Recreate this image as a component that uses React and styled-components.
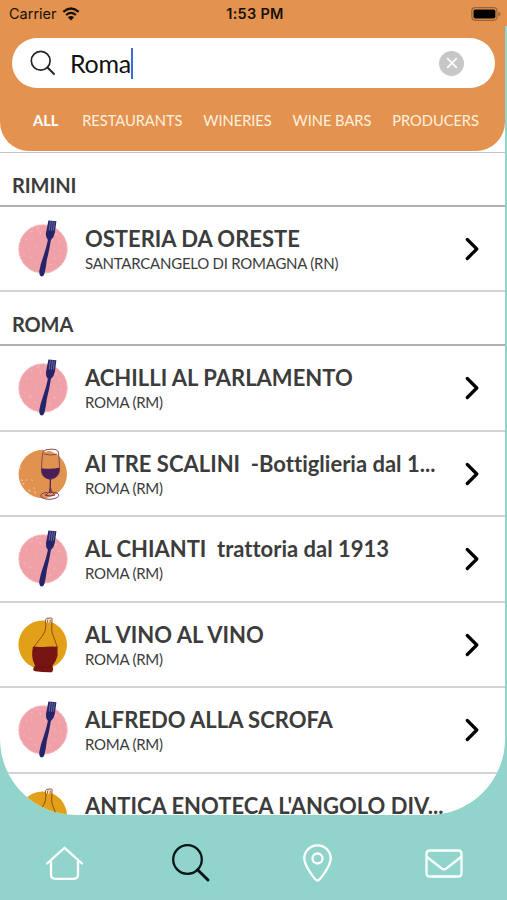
import React from 'react';
import styled, { createGlobalStyle } from 'styled-components'

const sections = [
    {
        city: 'RIMINI',
        places: [
            { name: 'OSTERIA DA ORESTE', town: 'SANTARCANGELO DI ROMAGNA (RN)', type: 'restaurant' },
        ],
    },
    {
        city: 'ROMA',
        places: [
            { name: 'ACHILLI AL PARLAMENTO', town: 'ROMA (RM)', type: 'restaurant' },
            { name: 'AI TRE SCALINI  -Bottiglieria dal 1...', town: 'ROMA (RM)', type: 'wineBar' },
            { name: 'AL CHIANTI  trattoria dal 1913', town: 'ROMA (RM)', type: 'restaurant' },
            { name: 'AL VINO AL VINO', town: 'ROMA (RM)', type: 'winery' },
            { name: 'ALFREDO ALLA SCROFA', town: 'ROMA (RM)', type: 'restaurant' },
            { name: "ANTICA ENOTECA L'ANGOLO DIV...", type: 'winery' },
        ],
    },
]

const filters = ['ALL', 'RESTAURANTS', 'WINERIES', 'WINE BARS', 'PRODUCERS']

function ForkIcon() {
    return (
        <PlaceImage viewBox='0 0 52 60'>
            <circle cx='26' cy='30' r='24' fill='#f0a0a7' />
            <circle cx='26' cy='30' r='24.2' fill='none' stroke='#f3abb1' strokeWidth='.9' strokeDasharray='5 1 9 .8 3 .6' />
            <g stroke='#f8ccd0' strokeWidth='1.1' strokeLinecap='round' opacity='.6'>
                <path d='M14 13l1.500-1M20 9.500l2-.8M23 13l.5 2M9 21l.6-.8M15 20l.1.1M7 34l.3 1M13 38l1 1M18 44l.1.8M38 15l2 1M42 22l.5 1M44 31l.1 1M37 40l1-1M33 46l1-.5M19 28l.2.2M38 29l.1.1M12 30l.1.1' />
            </g>
            <path d='M31.400 1.600L39.400 2.300L37.800 14Q37 18.500 33.900 21Q32.300 31.500 29.800 41Q29 49 27.500 54.500Q26.500 58 24 57.300Q22 56.500 22.300 52Q23.300 45.500 26.300 37.500Q29.500 28 30.900 21Q28.400 18 29 14Z' fill='#24246b' />
            <path d='M33.400 2.300L32.200 11.500M35.400 2.400L34.400 11.800M37.400 2.700L36.500 11.500' stroke='#9692b4' strokeWidth='.65' fill='none' />
        </PlaceImage>
    )
}

function GlassIcon() {
    return (
        <PlaceImage viewBox='0 0 52 60'>
            <circle cx='25.800' cy='30' r='24.200' fill='#e2924f' />
            <g stroke='#f5d5ae' strokeWidth='1.100' strokeLinecap='round'>
                <path d='M4.500 36l1 .5M9 36l.1.1M6 40l1-.4M12 46l1 1M17 44l.1.1M18 48l.3 1M3 24l.1 1M15 36l.1.1' />
            </g>
            <path d='M26.500 8Q27 5 34 5.200Q41 4.800 41.500 8Q42 10 39 10.500Q41 8.500 39 7Q34 6 28 8Z' fill='#fff' />
            <path d='M39 52.500Q42 50 41 48Q43.500 50 41.500 53Q38 56 34 54.500Z' fill='#fff' />
            <path d='M26 8Q24.600 15 24.500 24C23.600 30 27 34.500 33.300 35.300C39.600 34.500 43 30 42.500 24Q42.300 14 41.300 8M26 8Q28 5 34 5.200Q40.500 5 41.300 8M27 10Q33 12 40 10.300' fill='none' stroke='#834858' strokeWidth='1' />
            <path d='M24.600 24.200Q33 25.600 42.400 23.800C43 30.500 39.500 34.200 34 35.100L33.700 49H32.400L32.800 35.200C26 34.300 23.800 29.500 24.600 24.200Z' fill='#4b1d59' />
            <path d='M30.500 48.400C22 49.200 21.500 53.500 29 55C36 56 43 53.500 41.500 50.500C40.500 48.400 36 48 32 48.500M33 44Q33 49 28 51.500Q34 52.500 38 51Q34 49 33.300 43' fill='none' stroke='#713653' strokeWidth='1' />
        </PlaceImage>
    )
}

function FlaskIcon() {
    return (
        <PlaceImage viewBox='0 0 52 60'>
            <circle cx='25.700' cy='29.800' r='24.300' fill='#e2a018' />
            <path d='M28.700 5L29.300 3.200L34.500 3L34.800 5.500L34.500 7.500H29Z' fill='#fff' />
            <path d='M29 9Q28 6.500 28.700 4.500Q29.700 2.400 32 3.300Q35.500 1.800 35 5L34.700 15C35 20 38 24 39 28.500L40 32M29 8.500L28.300 15C27 20 22 25 19.500 28.500L17.200 32M30.500 7.500L30.800 4.500M33 7.500L33.200 4.500' fill='none' stroke='#8e4b18' strokeWidth='1' strokeLinejoin='round' />
            <path d='M16 31.500Q22 32.300 29 31.700Q35 31.200 40.700 31.800Q40.300 36 40.600 40.500Q39 47 35.300 51Q37 54 35 57.300Q27 57.600 18 56.200Q15.500 55.700 16.500 53L18 50.500Q15.500 46 15.200 41Q15 35 16 31.500Z' fill='#771512' />
            <path d='M18.500 51Q27 53.500 35 51.500M20 35l1 .3M29 34l1 .2M36 36l.5.3' fill='none' stroke='#64100d' strokeWidth='.7' />
        </PlaceImage>
    )
}

const icons = { restaurant: ForkIcon, wineBar: GlassIcon, winery: FlaskIcon }

function PlaceRow({ name, town, type }) {
    const Icon = icons[type]

    return (
        <RowWrapper>
            <Icon />
            <RowText>
                <PlaceName>{name}</PlaceName>
                {town && <Town>{town}</Town>}
            </RowText>
            <Chevron viewBox='0 0 14 24'>
                <path d='M2.300 2.500L11.800 12L2.300 21.500' />
            </Chevron>
        </RowWrapper>
    )
}

function StatusBar() {
    return (
        <StatusWrapper>
            <Carrier>
                Carrier
                <svg width='18' height='14' viewBox='0 0 18 14'>
                    <path d='M1.300 4.900Q9-1.900 16.700 4.900' fill='none' stroke='#17100a' strokeWidth='2.300' />
                    <path d='M4.100 8Q9 3.800 13.900 8' fill='none' stroke='#17100a' strokeWidth='2.200' />
                    <path d='M9 13.500L5.900 10.200Q9 7.600 12.100 10.200Z' fill='#17100a' />
                </svg>
            </Carrier>
            <Time>1:53 PM</Time>
            <Battery>
                <svg width='31' height='14' viewBox='0 0 31 14'>
                    <rect x='.8' y='.7' width='25.200' height='12.600' rx='3.500' fill='none' stroke='#9a6437' strokeWidth='1.200' />
                    <rect x='2.500' y='2.400' width='21.900' height='9.200' rx='1.800' fill='#000' />
                    <path d='M27.400 4.700Q29.600 5.400 29.600 7Q29.600 8.600 27.400 9.300Z' fill='#9a6437' />
                </svg>
            </Battery>
        </StatusWrapper>
    )
}

function App() {
    return (
        <Screen>
            <GlobalStyle />
            <StatusBar />
            <Page>
                <Header>
                    <SearchBar>
                        <svg width='26' height='26' viewBox='0 0 26 26' fill='none' stroke='#20242b' strokeWidth='1.700' strokeLinecap='round'>
                            <circle cx='10.700' cy='10.700' r='9.400' />
                            <path d='M17.500 17.500L24 24' strokeWidth='2' />
                        </svg>
                        <Query>Roma</Query>
                        <Caret />
                        <ClearButton aria-label='Clear'>
                            <svg width='12' height='12' viewBox='0 0 12 12' stroke='#fff' strokeWidth='1.700' strokeLinecap='round'>
                                <path d='M1.700 1.700L10.300 10.300M10.300 1.700L1.700 10.300' />
                            </svg>
                        </ClearButton>
                    </SearchBar>
                    <Filters>
                        {filters.map((filter, i) => <Filter key={filter} $active={i === 0}>{filter}</Filter>)}
                    </Filters>
                </Header>
                <Results>
                    {sections.map(({ city, places }) => (
                        <React.Fragment key={city}>
                            <City>{city}</City>
                            {places.map(place => <PlaceRow key={place.name} {...place} />)}
                        </React.Fragment>
                    ))}
                </Results>
            </Page>
            <TabBar>
                <Tab>
                    <svg width='40' height='40' viewBox='0 0 40 40'>
                        <path d='M3 20.500L20.500 4.800L38 20.500M7 18.500V31.500Q7 35.800 11.300 35.800H29.700Q34 35.800 34 31.500V18.500' />
                    </svg>
                </Tab>
                <Tab $active>
                    <svg width='40' height='40' viewBox='0 0 40 40'>
                        <circle cx='16.500' cy='16.500' r='14.300' />
                        <path d='M26.600 26.800L37 37' strokeWidth='3' />
                    </svg>
                </Tab>
                <Tab>
                    <svg width='40' height='40' viewBox='0 0 40 40'>
                        <path d='M20.500 37.500C18.500 37.500 7.300 23 7.300 15.500A13.200 13.200 0 0 1 33.700 15.500C33.700 23 22.500 37.500 20.500 37.500Z' />
                        <circle cx='20.500' cy='15.500' r='5' />
                    </svg>
                </Tab>
                <Tab>
                    <svg width='40' height='40' viewBox='0 0 40 40'>
                        <rect x='2.500' y='7.500' width='35' height='26' rx='3' />
                        <path d='M3 14L17.500 25.300Q20 27.300 22.500 25.300L37 14' />
                    </svg>
                </Tab>
            </TabBar>
        </Screen>
    )
}

export default App;

const GlobalStyle = createGlobalStyle`
    * {
        box-sizing: border-box;
    }

    body {
        margin: 0;
        font-family: Lato, 'Liberation Sans', sans-serif;
        font-variant-ligatures: none;
    }

    svg {
        display: block;
        flex-shrink: 0;
    }
`;

const Screen = styled.div`
    display: flex;
    flex-direction: column;
    width: 507px;
    height: 900px;
    overflow: hidden;
    background: #90d4cc;
`;

const StatusWrapper = styled.div`
    display: grid;
    grid-template-columns: 1fr auto 1fr;
    align-items: center;
    height: 26px;
    padding: 2px 5px 0 9px;
    background: #e3934f;
    color: #17100a;
    font: 14.5px/20px Inter, sans-serif;
`;

const Carrier = styled.div`
    display: flex;
    align-items: center;
    gap: 5px;
`;

const Time = styled.div`
    margin-right: 1px;
    font-weight: 600;
    letter-spacing: 0.3px;
`;

const Battery = styled.div`
    display: flex;
    justify-content: flex-end;
`;

const Page = styled.div`
    display: flex;
    flex-direction: column;
    width: 505px;
    height: 789px;
    overflow: hidden;
    background: #fff;
    border-radius: 0 0 76px 76px;
`;

const Header = styled.div`
    flex-shrink: 0;
    height: 124.5px;
    padding: 12px 10px 0 12px;
    background: #e3934f;
    border-radius: 0 0 29px 29px;
`;

const SearchBar = styled.div`
    display: flex;
    align-items: center;
    height: 50px;
    padding: 0 31px 0 18px;
    background: #fff;
    border-radius: 25px;
`;

const Query = styled.div`
    margin-left: 14px;
    color: #111;
    font-size: 25px;
    letter-spacing: -0.3px;
    line-height: 30px;
`;

const Caret = styled.div`
    width: 2px;
    height: 31px;
    background: #4169df;
`;

const ClearButton = styled.button`
    display: flex;
    align-items: center;
    justify-content: center;
    width: 25px;
    height: 25px;
    margin-left: auto;
    padding: 0;
    border: 0;
    border-radius: 50%;
    background: #c7c7c7;
`;

const Filters = styled.div`
    display: flex;
    justify-content: space-between;
    padding: 22px 16px 0 21px;
`;

const Filter = styled.div`
    margin-right: ${({ $active }) => $active ? '3px' : 0};
    color: ${({ $active }) => $active ? '#fff' : '#fff0df'};
    font-size: 14.7px;
    font-weight: ${({ $active }) => $active ? 700 : 400};
    letter-spacing: -0.05px;
    line-height: 20px;
`;

const Results = styled.div`
    flex: 1;
    min-height: 0;
    margin-top: 1px;
    overflow: hidden;
    border-top: 1.5px solid #c3c3c3;
`;

const City = styled.div`
    height: 54px;
    padding: 19px 12px 0;
    border-bottom: 2px solid #b0b0b0;
    color: #3c3c3c;
    font-size: 20px;
    font-weight: 700;
    letter-spacing: -0.1px;
    line-height: 26px;
`;

const RowWrapper = styled.div`
    display: flex;
    align-items: center;
    height: 85.5px;
    padding: 1px 26px 0 17px;
    border-bottom: 2px solid #d2d2d2;
`;

const PlaceImage = styled.svg`
    width: 52px;
    height: 60px;
`;

const RowText = styled.div`
    flex: 1;
    height: 48px;
    margin-left: 16px;
    color: #3c3c3c;
    white-space: pre;
`;

const PlaceName = styled.div`
    padding: 3px 0;
    font-size: 22px;
    font-weight: 700;
    letter-spacing: 0;
    line-height: 22px;
`;

const Town = styled.div`
    font-size: 15px;
    letter-spacing: -0.25px;
    line-height: 21px;
`;

const Chevron = styled.svg`
    width: 14px;
    height: 24px;
    fill: none;
    stroke: #000;
    stroke-width: 3.2;
    stroke-linecap: round;
    stroke-linejoin: round;
`;

const TabBar = styled.div`
    display: flex;
    justify-content: space-between;
    padding: 28px 43px 0 44px;
`;

const Tab = styled.div`
    svg {
        fill: none;
        stroke: ${({ $active }) => $active ? '#071517' : '#fff'};
        stroke-width: 2.3;
        stroke-linecap: round;
        stroke-linejoin: round;
    }
`;
